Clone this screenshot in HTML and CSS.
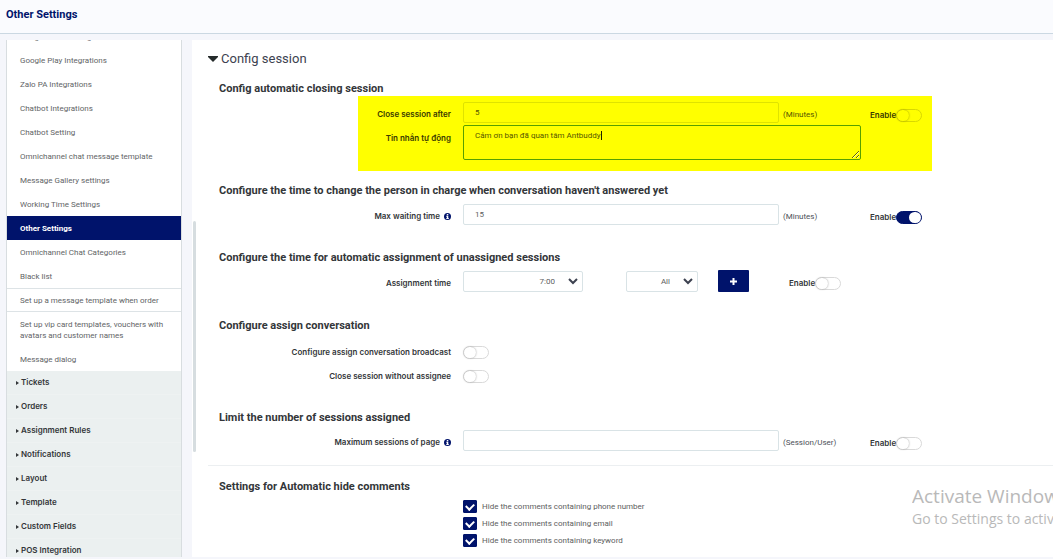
FILE: index.html
```html
<!DOCTYPE html>
<html lang="en">
<head>
<meta charset="utf-8">
<meta name="viewport" content="width=device-width, initial-scale=1">
<title>Other Settings</title>
<link rel="stylesheet" href="styles.css">
</head>
<body>
<header class="topbar"><h1 class="topbar-title">Other Settings</h1></header>
<div class="layout">
  <nav class="sidebar" aria-label="Settings">
    <div class="side-scroll">
      <a class="side-link" href="#">Google Sheets Integrations</a>
      <a class="side-link" href="#">Google Play Integrations</a>
      <a class="side-link" href="#">Zalo PA Integrations</a>
      <a class="side-link" href="#">Chatbot Integrations</a>
      <a class="side-link" href="#">Chatbot Setting</a>
      <a class="side-link" href="#">Omnichannel chat message template</a>
      <a class="side-link" href="#">Message Gallery settings</a>
      <a class="side-link" href="#">Working Time Settings</a>
      <a class="side-link active" href="#" aria-current="page">Other Settings</a>
      <a class="side-link" href="#">Omnichannel Chat Categories</a>
      <a class="side-link" href="#">Black list</a>
      <a class="side-link lined" href="#">Set up a message template when order</a>
      <a class="side-link" href="#">Set up vip card templates, vouchers with avatars and customer names</a>
      <a class="side-link" href="#">Message dialog</a>
      <button class="side-group" type="button">Tickets</button>
      <button class="side-group" type="button">Orders</button>
      <button class="side-group" type="button">Assignment Rules</button>
      <button class="side-group" type="button">Notifications</button>
      <button class="side-group" type="button">Layout</button>
      <button class="side-group" type="button">Template</button>
      <button class="side-group" type="button">Custom Fields</button>
      <button class="side-group" type="button">POS Integration</button>
    </div>
  </nav>
  <main class="panel">
    <span class="thumb"></span>
    <h2 class="panel-title"><svg class="caret" viewBox="0 0 10 6" aria-hidden="true"><path d="M0 0h10v1L5 6 0 1z"/></svg>Config session</h2>

    <section class="section closing">
      <h3 class="section-title">Config automatic closing session</h3>
      <div class="marked-row">
        <div class="marked">
          <div class="row row-marked">
            <label class="label" for="close-after">Close session after</label>
            <input class="field" id="close-after" type="text" value="5">
            <span class="unit">(Minutes)</span>
            <label class="enable">Enable<input class="switch" type="checkbox" role="switch"></label>
          </div>
          <div class="row row-message">
            <label class="label" for="auto-message">Tin nhắn tự động</label>
            <div class="message-box">
              <textarea class="field message" id="auto-message" spellcheck="false">Cảm ơn bạn đã quan tâm Antbuddy</textarea>
              <span class="text-cursor"></span>
            </div>
          </div>
        </div>
      </div>
    </section>

    <section class="section waiting">
      <h3 class="section-title">Configure the time to change the person in charge when conversation haven't answered yet</h3>
      <div class="row">
        <label class="label" for="max-wait">Max waiting time <svg class="info" viewBox="0 0 14 14" aria-hidden="true"><circle cx="7" cy="7" r="7"/><path d="M5.6 2h3v2.4h-3zM4.6 5.6h4v4.4h1v2h-5v-2h1V7.6h-1z"/></svg></label>
        <input class="field" id="max-wait" type="text" value="15">
        <span class="unit">(Minutes)</span>
        <label class="enable">Enable<input class="switch" type="checkbox" role="switch" checked></label>
      </div>
    </section>

    <section class="section timing">
      <h3 class="section-title">Configure the time for automatic assignment of unassigned sessions</h3>
      <div class="row row-time">
        <label class="label" for="time">Assignment time</label>
        <span class="pick pick-wide"><select class="field select" id="time"><option>7:00</option></select><svg class="arrow" viewBox="0 0 10 7" aria-hidden="true"><path d="M1 1l4 4 4-4"/></svg></span>
        <span class="pick"><select class="field select" aria-label="Days"><option>All</option></select><svg class="arrow" viewBox="0 0 10 7" aria-hidden="true"><path d="M1 1l4 4 4-4"/></svg></span>
        <button class="add" type="button" aria-label="Add time"><svg class="plus" viewBox="0 0 7 7" aria-hidden="true"><path d="M3.5 0v7M0 3.5h7"/></svg></button>
        <label class="enable">Enable<input class="switch" type="checkbox" role="switch"></label>
      </div>
    </section>

    <section class="section assign">
      <h3 class="section-title">Configure assign conversation</h3>
      <div class="row row-switch">
        <label class="label" for="broadcast">Configure assign conversation broadcast</label>
        <input class="switch" id="broadcast" type="checkbox" role="switch">
      </div>
      <div class="row row-switch">
        <label class="label" for="no-assignee">Close session without assignee</label>
        <input class="switch" id="no-assignee" type="checkbox" role="switch">
      </div>
    </section>

    <section class="section limit">
      <h3 class="section-title">Limit the number of sessions assigned</h3>
      <div class="row">
        <label class="label" for="max-sessions">Maximum sessions of page <svg class="info" viewBox="0 0 14 14" aria-hidden="true"><circle cx="7" cy="7" r="7"/><path d="M5.6 2h3v2.4h-3zM4.6 5.6h4v4.4h1v2h-5v-2h1V7.6h-1z"/></svg></label>
        <input class="field" id="max-sessions" type="text">
        <span class="unit">(Session/User)</span>
        <label class="enable">Enable<input class="switch" type="checkbox" role="switch"></label>
      </div>
    </section>

    <section class="section hiding">
      <h3 class="section-title">Settings for Automatic hide comments</h3>
      <div class="row">
        <div class="checks">
          <label class="check"><input class="tick" type="checkbox" checked>Hide the comments containing phone number</label>
          <label class="check"><input class="tick" type="checkbox" checked>Hide the comments containing email</label>
          <label class="check"><input class="tick" type="checkbox" checked>Hide the comments containing keyword</label>
        </div>
      </div>
    </section>
  </main>
</div>
<div class="watermark" aria-hidden="true">
  <div class="watermark-title">Activate Windows</div>
  <div class="watermark-text">Go to Settings to activate Windows.</div>
</div>
</body>
</html>
```
FILE: styles.css
```css
* { box-sizing: border-box; }
body {
  margin: 0;
  height: 100vh;
  display: flex;
  flex-direction: column;
  overflow: hidden;
  background: #f5f6fb;
  color: #333639;
  font: 8px/11px Roboto, "Noto Sans", sans-serif;
}
h1, h2, h3 { margin: 0; }
input, select, textarea, button { font: inherit; color: inherit; margin: 0; }

.topbar {
  flex: none;
  padding: 8px 6px 11px;
  background: #fafbfe;
  border-bottom: 1px solid #cbd8e2;
}
.topbar-title { font-size: 11px; line-height: 14px; font-weight: 700; color: #00136b; }

.layout {
  flex: 1;
  min-height: 0;
  display: grid;
  grid-template-columns: 176px minmax(0, 1fr);
  gap: 10px;
  padding: 6px 0 2px 6px;
}

.sidebar {
  display: flex;
  flex-direction: column;
  overflow: hidden;
  background: #fff;
  border: solid #d8dde0;
  border-width: 0 1px;
}
.side-scroll { margin-top: -15px; }
.side-link {
  display: block;
  padding: 7px 13px 6px;
  color: #626466;
  text-decoration: none;
}
.side-link:first-child { padding-bottom: 5px; }
.side-link.active { background: #00136b; color: #fff; font-weight: 700; }
.side-link.lined { border: solid #dde3e6; border-width: 1px 0; padding: 6px 13px 5px; }
.side-group {
  display: flex;
  align-items: center;
  gap: 2px;
  width: 100%;
  height: 24px;
  padding: 0 9px;
  border: 0;
  border-bottom: 1px solid #eef2f2;
  background: #ebf0f0;
  font-family: Inter, "Noto Sans", sans-serif;
  font-weight: 600;
  text-align: left;
}
.side-group::before {
  content: "";
  border: solid transparent;
  border-width: 2px 0 2px 3px;
  border-left-color: #333639;
}

.panel {
  position: relative;
  overflow: hidden;
  padding: 10px 0 0 16px;
  background: #fff;
}
.thumb {
  position: absolute;
  left: 1px;
  top: 181px;
  width: 3px;
  height: 231px;
  border-radius: 2px;
  background: #d6dde0;
}
.panel-title {
  display: flex;
  align-items: center;
  gap: 3px;
  font-size: 13px;
  line-height: 18px;
  font-weight: 400;
  color: #3d4250;
}
.caret { width: 10px; height: 6px; fill: #252b2b; }

.section-title { padding-left: 11px; font-size: 11px; line-height: 14px; font-weight: 700; }
.closing { padding-top: 14px; }
.waiting { padding-top: 13px; }
.timing { padding-top: 26px; }
.assign { padding-top: 27px; }
.limit { padding: 23px 0 14px; border-bottom: 1px solid #eceff1; }
.hiding { padding-top: 14px; }

.row {
  display: grid;
  grid-template-columns: 255fr 316fr 91fr 183fr;
  align-items: center;
  padding-top: 6px;
}
.limit .row { padding-top: 5px; }
.row-time { grid-template-columns: 255fr 163fr 92fr 71fr 264fr; padding-top: 5px; }
.row-switch { grid-template-columns: 255fr 590fr; padding: 0; height: 24px; }
.assign .section-title { padding-bottom: 7px; }

.marked-row { display: grid; grid-template-columns: 150fr 574fr 121fr; }
.marked {
  grid-column: 2;
  padding: 6px 0 11px;
  background: #ff0;
  color: #3a3a00;
}
.row-marked { grid-template-columns: 105fr 316fr 91fr 62fr; padding: 0; }
.row-message { grid-template-columns: 105fr 398fr 71fr; padding: 2px 0 0; align-items: start; }
.row-message .label { padding-top: 8px; }

.label {
  display: flex;
  justify-content: flex-end;
  align-items: center;
  gap: 4px;
  padding: 4px 12px 0 0;
  font-family: Inter, "Noto Sans", sans-serif;
  font-weight: 600;
  text-align: right;
}
.row-switch .label { padding-top: 0; }
.info { width: 7px; height: 7px; fill: #00136b; }
.info path { fill: #fff; }
.field {
  display: block;
  width: 100%;
  height: 21px;
  padding: 0 11px;
  border: 1px solid #d9e3e6;
  border-radius: 2px;
  background: transparent;
  color: #5c5e60;
  outline: 0;
}
.marked .field { border-color: #dfe300; color: #555500; }
.message-box { position: relative; }
.marked .message { height: 35px; padding-top: 4px; border-color: #57a000; resize: both; }
.text-cursor { position: absolute; left: 138px; top: 6px; width: 1px; height: 9px; background: #222200; }
.unit { padding: 4px 0 0 4px; color: #4c5058; }
.marked .unit { color: #555500; }
.enable {
  display: flex;
  align-items: center;
  padding-top: 5px;
  font-family: Inter, "Noto Sans", sans-serif;
  font-weight: 600;
}

.switch {
  appearance: none;
  flex: none;
  display: block;
  width: 26px;
  height: 13px;
  border: 1px solid #d9d9d9;
  border-radius: 7px;
  background: #fff;
}
.switch::before {
  content: "";
  display: block;
  width: 12px;
  height: 11px;
  border-radius: 6px;
  background: #fff;
  box-shadow: 0 0 2px #999;
}
.switch:checked { background: #00136b; border-color: #00136b; }
.switch:checked::before { margin-left: 12px; box-shadow: none; }
.marked .switch { background: #ff0; border-color: #d8d800; }
.marked .switch::before { background: #ff0; box-shadow: 0 0 2px #999900; }

.pick { position: relative; width: 72px; }
.pick-wide { width: 120px; }
.select { appearance: none; padding: 0 27px 0 8px; text-align-last: right; }
.arrow {
  position: absolute;
  right: 5px;
  top: 7px;
  width: 10px;
  height: 7px;
  fill: none;
  stroke: #3d4250;
  stroke-width: 2;
  pointer-events: none;
}
.add {
  display: grid;
  place-items: center;
  width: 31px;
  height: 22px;
  padding: 0;
  border: 0;
  border-radius: 1px;
  background: #00136b;
}
.plus { width: 7px; height: 7px; stroke: #fff; stroke-width: 2; }

.checks { grid-column: 2 / -1; display: grid; gap: 4px; }
.check { display: flex; align-items: center; gap: 5px; color: #5c5e60; }
.tick {
  appearance: none;
  display: grid;
  place-items: center;
  width: 14px;
  height: 13px;
  border-radius: 1px;
  border: 1px solid #00136b;
}
.tick:checked { background: #00136b; }
.tick:checked::before {
  content: "";
  width: 4px;
  height: 6px;
  margin-bottom: 1px;
  border: solid #fff;
  border-width: 0 2px 2px 0;
  transform: rotate(45deg);
}

.watermark {
  position: absolute;
  left: 912px;
  right: 0;
  top: 484px;
  overflow: hidden;
  white-space: nowrap;
  color: #b9b9b9;
  font-family: "Open Sans", "Noto Sans", sans-serif;
  pointer-events: none;
}
.watermark-title { font-size: 19px; line-height: 24px; }
.watermark-text { font-size: 14px; line-height: 22px; }
```
